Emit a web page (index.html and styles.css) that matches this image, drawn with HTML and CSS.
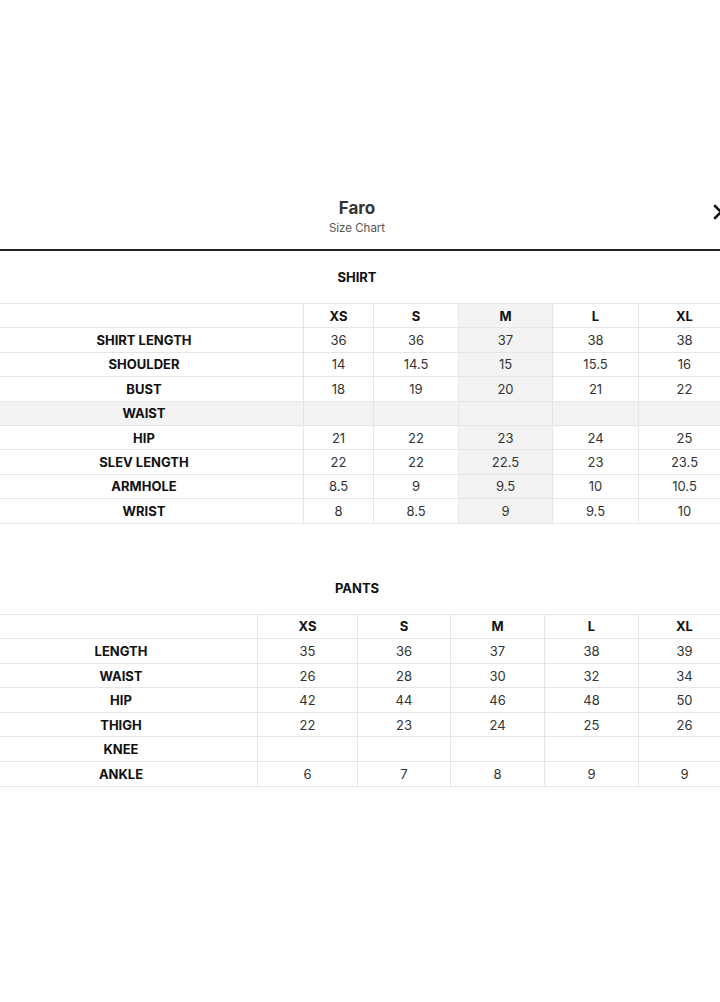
FILE: index.html
```html
<!DOCTYPE html>
<html lang="en">
<head>
<meta charset="utf-8">
<title>Faro - Size Chart</title>
<link rel="stylesheet" href="styles.css">
</head>
<body>
<div class="modal">
  <header class="modal-head">
    <h1 class="title">Faro</h1>
    <p class="subtitle">Size Chart</p>
    <button class="close" aria-label="Close">
      <svg width="16" height="16" viewBox="0 0 16 16"><path d="M2 2 L14 14 M14 2 L2 14" stroke="#111" stroke-width="2.6" stroke-linecap="round"/></svg>
    </button>
  </header>

  <section class="chart">
    <h2 class="chart-title">SHIRT</h2>
    <table class="size-table shirt">
      <colgroup>
        <col class="c-label-shirt"><col style="width:70px"><col style="width:85px"><col style="width:94px"><col style="width:86px"><col style="width:92px">
      </colgroup>
      <thead>
        <tr><th></th><th>XS</th><th>S</th><th class="hl">M</th><th>L</th><th>XL</th></tr>
      </thead>
      <tbody>
        <tr><th>SHIRT LENGTH</th><td>36</td><td>36</td><td class="hl">37</td><td>38</td><td>38</td></tr>
        <tr><th>SHOULDER</th><td>14</td><td>14.5</td><td class="hl">15</td><td>15.5</td><td>16</td></tr>
        <tr><th>BUST</th><td>18</td><td>19</td><td class="hl">20</td><td>21</td><td>22</td></tr>
        <tr class="grey"><th>WAIST</th><td></td><td></td><td class="hl"></td><td></td><td></td></tr>
        <tr><th>HIP</th><td>21</td><td>22</td><td class="hl">23</td><td>24</td><td>25</td></tr>
        <tr><th>SLEV LENGTH</th><td>22</td><td>22</td><td class="hl">22.5</td><td>23</td><td>23.5</td></tr>
        <tr><th>ARMHOLE</th><td>8.5</td><td>9</td><td class="hl">9.5</td><td>10</td><td>10.5</td></tr>
        <tr><th>WRIST</th><td>8</td><td>8.5</td><td class="hl">9</td><td>9.5</td><td>10</td></tr>
      </tbody>
    </table>
  </section>

  <section class="chart pants-chart">
    <h2 class="chart-title">PANTS</h2>
    <table class="size-table pants">
      <colgroup>
        <col class="c-label-pants"><col style="width:100px"><col style="width:93px"><col style="width:94px"><col style="width:94px"><col style="width:92px">
      </colgroup>
      <thead>
        <tr><th></th><th>XS</th><th>S</th><th>M</th><th>L</th><th>XL</th></tr>
      </thead>
      <tbody>
        <tr><th>LENGTH</th><td>35</td><td>36</td><td>37</td><td>38</td><td>39</td></tr>
        <tr><th>WAIST</th><td>26</td><td>28</td><td>30</td><td>32</td><td>34</td></tr>
        <tr><th>HIP</th><td>42</td><td>44</td><td>46</td><td>48</td><td>50</td></tr>
        <tr><th>THIGH</th><td>22</td><td>23</td><td>24</td><td>25</td><td>26</td></tr>
        <tr><th>KNEE</th><td></td><td></td><td></td><td></td><td></td></tr>
        <tr><th>ANKLE</th><td>6</td><td>7</td><td>8</td><td>9</td><td>9</td></tr>
      </tbody>
    </table>
  </section>
</div>
</body>
</html>
```

FILE: styles.css
```css
html, body {
  margin: 0;
  padding: 0;
  background: #fff;
  overflow: hidden;
}

body {
  font-family: "Inter", "Noto Sans", "Liberation Sans", sans-serif;
  color: #111;
}

.modal {
  width: 746px;
  margin-left: -16px;
  padding-top: 197px;
}

.modal-head {
  position: relative;
  text-align: center;
  border-bottom: 2px solid #222;
  padding-bottom: 13px;
}

.title {
  margin: 0;
  font-size: 17px;
  line-height: 22px;
  font-weight: 700;
  color: #333;
}

.subtitle {
  margin: 1px 0 0;
  font-size: 11.5px;
  line-height: 16px;
  color: #555;
}

.close {
  position: absolute;
  top: 3px;
  right: -3px;
  width: 24px;
  height: 24px;
  padding: 0;
  border: 0;
  background: none;
  display: flex;
  align-items: center;
  justify-content: center;
}

.chart-title {
  margin: 0;
  text-align: center;
  font-size: 13px;
  line-height: 16px;
  font-weight: 700;
  color: #111;
  padding-top: 18px;
  padding-bottom: 18px;
}

.pants-chart {
  margin-top: 56px;
}

.pants-chart .chart-title {
  padding-top: 0;
  padding-bottom: 18px;
}

.size-table {
  width: 746px;
  border-collapse: collapse;
  table-layout: fixed;
  font-size: 13px;
}

.c-label-shirt { width: 319px; }
.c-label-pants { width: 273px; }

.size-table th,
.size-table td {
  border: 1px solid #e6e6e6;
  height: 23.4px;
  padding: 0;
  text-align: center;
  vertical-align: middle;
  line-height: 16px;
}

.pants .size-table th,
.pants th,
.pants td {
  height: 23.6px;
}

.size-table th {
  font-weight: 700;
  color: #111;
}

.size-table td {
  color: #333;
  font-weight: 400;
}

.size-table .hl {
  background: #f3f3f3;
}

.size-table tr.grey th,
.size-table tr.grey td {
  background: #f3f3f3;
}
```
